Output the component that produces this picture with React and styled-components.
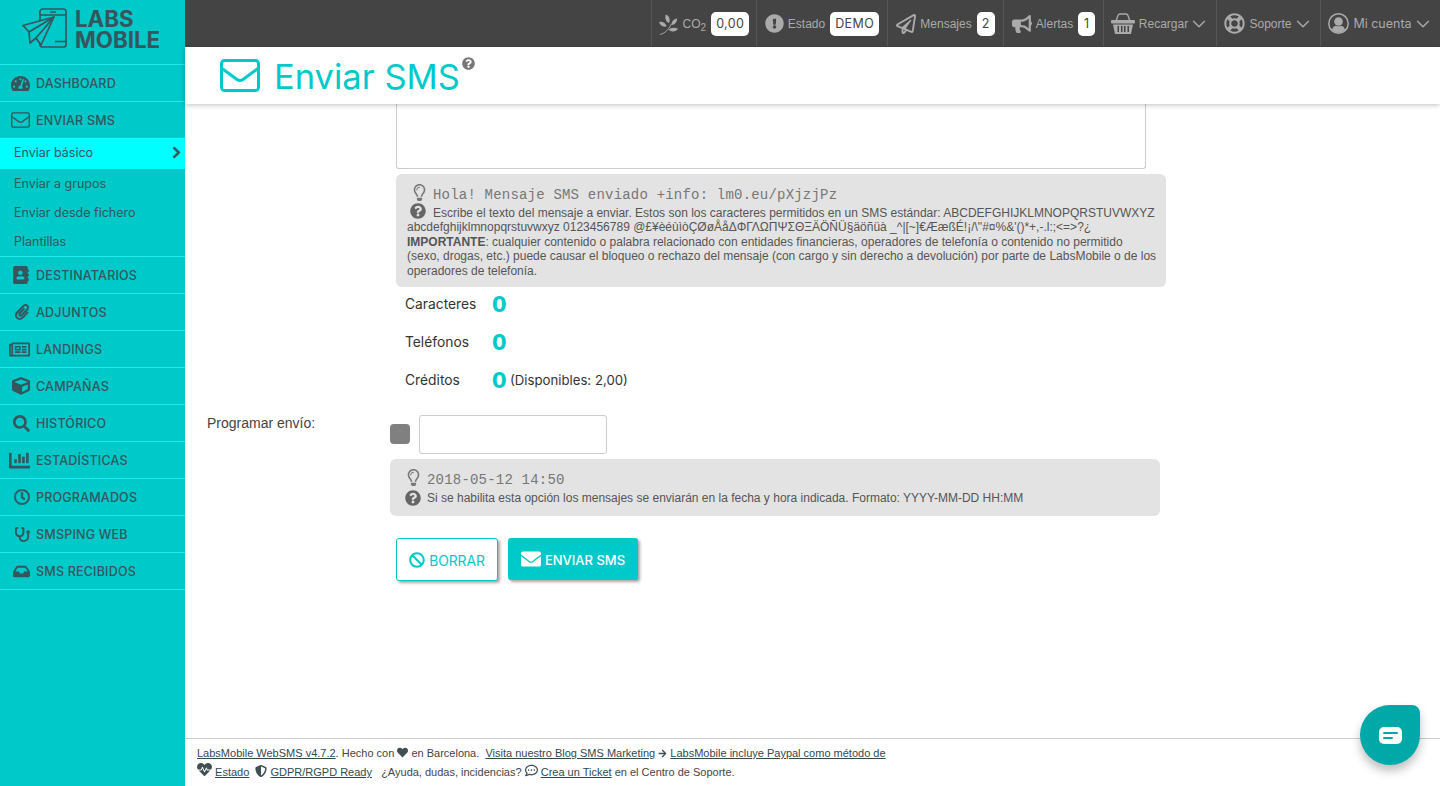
import styled, { createGlobalStyle } from 'styled-components';
import {
  FaTachometerAlt, FaAddressBook, FaPaperclip, FaRegNewspaper, FaCube, FaSearch,
  FaChartBar, FaRegClock, FaStethoscope, FaInbox, FaChevronRight, FaExclamationCircle,
  FaRegPaperPlane, FaBullhorn, FaRegLifeRing, FaQuestionCircle,
  FaRegLightbulb, FaBan, FaEnvelope, FaHeart, FaHeartbeat, FaShieldAlt, FaRegCommentDots, FaArrowRight,
} from 'react-icons/fa';
import { LuChevronDown } from 'react-icons/lu';

const teal = '#00c9c9';
const ink = '#35565c';
const geo = "Inter, 'Noto Sans', sans-serif";
const helv = "'Liberation Sans', Arial, sans-serif";
const mono = "'Liberation Mono', 'Courier New', monospace";

const GlobalStyle = createGlobalStyle`
  html, body { margin: 0; height: 100%; overflow: hidden; background: #fff; }
  * { box-sizing: border-box; }
`;

function LogoMark() {
  return (
    <svg width="46" height="42" viewBox="0 0 46 42" fill="none" stroke={ink} strokeWidth="1.7" strokeLinejoin="round">
      <path d="M18 25V3.5a2.5 2.5 0 0 1 2.500-2.500h21a2.500 2.500 0 0 1 2.500 2.500v33a2.500 2.500 0 0 1-2.500 2.500h-21a2.500 2.500 0 0 1-2.500-2.500V33" />
      <path d="M18 7h26M33 33.500h11M28 4h6" />
      <path d="M1 17.500 32 9 19 37l-5-7-6 5-1-11z" fill="#00c9c9" />
      <path d="M7 24 32 9 14 30" />
    </svg>
  );
}

function SprigIcon() {
  return (
    <svg width="20" height="24" viewBox="0 0 21 24" fill="#aaa">
      <path d="M1 23c5-1 9-5 12-11" fill="none" stroke="#aaa" strokeWidth="1" />
      <path d="M7 15C3 15 1 13 0 10c3-1 6 0 8 4zM10 11C7 9 6 6 7 2c3 1 5 4 4 8zM13 13c0-3 2-6 6-7 0 4-2 7-6 7zM10 18c2-2 6-3 10-1-2 3-6 4-10 1z" />
    </svg>
  );
}

function EnvelopeOutline({ width, height, stroke }) {
  return (
    <svg width={width} height={height} viewBox="0 0 40 33" fill="none" stroke="currentColor" strokeWidth={stroke} strokeLinejoin="round" strokeLinecap="round">
      <rect x="1.500" y="1.500" width="37" height="30" rx="3" />
      <path d="M2 9.500 17 20.500q3 2 6 0L38 9.500" />
    </svg>
  );
}

function BasketIcon() {
  return (
    <svg width="24" height="22" viewBox="0 0 24 22" fill="#aaa">
      <path d="M5 8 7 2.500Q7.500 1 9 1h6q1.500 0 2 1.500L19 8" fill="none" stroke="#aaa" strokeWidth="1.400" />
      <rect x="0" y="7" width="24" height="3.500" rx="1" />
      <path d="M2 11.500h20L20 21H4zM6.500 13v6h1.500v-6zM10 13v6h1.500v-6zM13 13v6h1.500v-6zM16.500 13v6H18v-6z" fillRule="evenodd" />
    </svg>
  );
}

function AccountIcon() {
  return (
    <svg width="21" height="21" viewBox="0 0 21 21" fill="#aaa">
      <circle cx="10.500" cy="10.500" r="9.700" fill="none" stroke="#aaa" strokeWidth="1.500" />
      <circle cx="10.500" cy="8.500" r="4.300" />
      <path d="M3.800 16.500q1.500-3.500 4-3.800 2.700 1.200 5.400 0 2.500.3 4 3.800-3 3.300-6.700 3.300t-6.700-3.300z" />
    </svg>
  );
}

const ClockIcon = styled.span`
  display: flex;

  svg { stroke: currentColor; stroke-width: 14px; }
`;

const navItems = [
  { label: 'DASHBOARD', icon: <FaTachometerAlt size={19} /> },
  { label: 'ENVIAR SMS', icon: <EnvelopeOutline width={19} height={16} stroke={2.800} />, subs: ['Enviar básico', 'Enviar a grupos', 'Enviar desde fichero', 'Plantillas'] },
  { label: 'DESTINATARIOS', icon: <FaAddressBook size={18} /> },
  { label: 'ADJUNTOS', icon: <FaPaperclip size={16} /> },
  { label: 'LANDINGS', icon: <FaRegNewspaper size={21} /> },
  { label: 'CAMPAÑAS', icon: <FaCube size={18} /> },
  { label: 'HISTÓRICO', icon: <FaSearch size={17} /> },
  { label: 'ESTADÍSTICAS', icon: <FaChartBar size={21} /> },
  { label: 'PROGRAMADOS', icon: <ClockIcon><FaRegClock size={16} /></ClockIcon> },
  { label: 'SMSPING WEB', icon: <FaStethoscope size={15} /> },
  { label: 'SMS RECIBIDOS', icon: <FaInbox size={17} /> },
];

const topItems = [
  { width: 105, label: 'CO', sub: '2', icon: <SprigIcon />, badge: '0,00' },
  { width: 131, label: 'Estado', icon: <FaExclamationCircle size={19} />, badge: 'DEMO' },
  { width: 116, label: 'Mensajes', icon: <FaRegPaperPlane size={20} />, badge: '2' },
  { width: 100, label: 'Alertas', icon: <FaBullhorn size={20} />, badge: '1' },
  { width: 113, label: 'Recargar', icon: <BasketIcon />, caret: true },
  { width: 104, label: 'Soporte', icon: <FaRegLifeRing size={21} />, caret: true },
  { width: 120, label: 'Mi cuenta', icon: <AccountIcon />, caret: true, geometric: true },
];

function App() {
  return (
    <>
      <GlobalStyle />
      <Page>
        <Sidebar>
          <Logo>
            <LogoMark />
            <LogoText>LABS<br />MOBILE</LogoText>
          </Logo>
          {navItems.map((item) => (
            <div key={item.label}>
              <NavRow>
                <NavIcon>{item.icon}</NavIcon>
                {item.label}
              </NavRow>
              {item.subs && item.subs.map((sub, i) => (
                <SubRow key={sub} $active={i === 0}>
                  {sub}
                  {i === 0 && <FaChevronRight size={13} />}
                </SubRow>
              ))}
            </div>
          ))}
          <NavEnd />
        </Sidebar>
        <Main>
          <TopBar>
            {topItems.map((item) => (
              <TopItem key={item.label} $width={item.width}>
                {item.icon}
                <TopLabel $geometric={item.geometric}>
                  {item.label}
                  {item.sub && <TopSub>{item.sub}</TopSub>}
                </TopLabel>
                {item.badge && <Badge>{item.badge}</Badge>}
                {item.caret && <Caret><LuChevronDown size={22} strokeWidth={1.500} /></Caret>}
              </TopItem>
            ))}
          </TopBar>
          <TitleBar>
            <EnvelopeOutline width={40} height={33} stroke={3} />
            <Title>Enviar SMS</Title>
            <TitleHelp><FaQuestionCircle size={13} /></TitleHelp>
          </TitleBar>
          <Content>
            <MessageBox />
            <MessageHint>
              <HintCode $indent={4}><BulbMark><FaRegLightbulb size={17} /></BulbMark>Hola! Mensaje SMS enviado +info: lm0.eu/pXjzjPz</HintCode>
              <HintText>
                <HintMark><FaQuestionCircle size={16} /></HintMark>
                Escribe el texto del mensaje a enviar. Estos son los caracteres permitidos en un SMS estándar: ABCDEFGHIJKLMNOPQRSTUVWXYZ abcdefghijklmnopqrstuvwxyz 0123456789 @£¥èéùìòÇØøÅåΔΦΓΛΩΠΨΣΘΞÄÖÑÜ§äöñüà _^|{}[~]€ÆæßÉ!¡/\"#¤%&'()*+,-.l:;&lt;=&gt;?¿
                <br />
                <strong>IMPORTANTE</strong>: cualquier contenido o palabra relacionado con entidades financieras, operadores de telefonía o contenido no permitido (sexo, drogas, etc.) puede causar el bloqueo o rechazo del mensaje (con cargo y sin derecho a devolución) por parte de LabsMobile o de los operadores de telefonía.
              </HintText>
            </MessageHint>
            <Counters>
              <CounterRow><CounterName>Caracteres</CounterName><CounterValue>0</CounterValue></CounterRow>
              <CounterRow><CounterName>Teléfonos</CounterName><CounterValue>0</CounterValue></CounterRow>
              <CounterRow>
                <CounterName>Créditos</CounterName>
                <CounterValue>0</CounterValue>
                <Available>(Disponibles: 2,00)</Available>
              </CounterRow>
            </Counters>
            <ScheduleRow>
              <ScheduleLabel>Programar envío:</ScheduleLabel>
              <Toggle />
              <DateInput />
            </ScheduleRow>
            <ScheduleHint>
              <HintCode $indent={0}><BulbMark><FaRegLightbulb size={17} /></BulbMark>2018-05-12 14:50</HintCode>
              <HintLine><FaQuestionCircle size={16} />Si se habilita esta opción los mensajes se enviarán en la fecha y hora indicada. Formato: YYYY-MM-DD HH:MM</HintLine>
            </ScheduleHint>
            <Actions>
              <OutlineButton><FaBan size={16} /><ButtonText>BORRAR</ButtonText></OutlineButton>
              <SolidButton><FaEnvelope size={20} /><ButtonText>ENVIAR SMS</ButtonText></SolidButton>
            </Actions>
          </Content>
          <Footer>
            <FootLine>
              <FootLink>LabsMobile WebSMS v4.7.2</FootLink>. Hecho con <FaHeart size={11} /> en Barcelona.&nbsp; <FootLink>Visita nuestro Blog SMS Marketing</FootLink> <FaArrowRight size={9} /> <FootLink>LabsMobile incluye Paypal como método de</FootLink>
            </FootLine>
            <FootLine>
              <FaHeartbeat size={15} /> <FootLink>Estado</FootLink> &nbsp;<FaShieldAlt size={12} /> <FootLink>GDPR/RGPD Ready</FootLink> &nbsp;&nbsp;¿Ayuda, dudas, incidencias? <FaRegCommentDots size={13} /> <FootLink>Crea un Ticket</FootLink> en el Centro de Soporte.
            </FootLine>
          </Footer>
        </Main>
        <ChatBubble>
          <svg width="23" height="17" viewBox="0 0 23 17">
            <rect width="23" height="17" rx="5" fill="#fff" />
            <path d="M5 6h13M5 11h8" stroke="#00a8a8" strokeWidth="2" strokeLinecap="round" />
          </svg>
        </ChatBubble>
      </Page>
    </>
  );
}

const Page = styled.div`
  display: flex;
  height: 786px;
  position: relative;
  overflow: hidden;
`;

const Sidebar = styled.aside`
  width: 185px;
  flex: none;
  background: ${teal};
  color: ${ink};
`;

const Logo = styled.div`
  height: 64px;
  display: flex;
  align-items: center;
  gap: 7px;
  padding: 0 0 7px 22px;
`;

const LogoText = styled.div`
  font: 700 22.300px/21px ${geo};
  color: ${ink};
`;

const NavRow = styled.div`
  height: 37px;
  border-top: 1px solid #1fecec;
  display: flex;
  align-items: center;
  font: 500 12.500px ${geo};
  letter-spacing: 0.2px;
`;

const NavEnd = styled.div`
  border-top: 1px solid #1fecec;
`;

const NavIcon = styled.span`
  width: 36px;
  padding: 0 6px 0 8px;
  flex: none;
  display: flex;
  justify-content: flex-end;
`;

const SubRow = styled.div`
  height: ${({ $active }) => ($active ? '31px' : '29px')};
  padding: 0 2px ${({ $active }) => ($active ? '2px' : '0')} 14px;
  display: flex;
  align-items: center;
  justify-content: space-between;
  font: 12.500px ${geo};
  background: ${({ $active }) => ($active ? '#00ffff' : 'transparent')};

  svg { stroke: currentColor; stroke-width: 30px; }
`;

const Main = styled.div`
  flex: 1;
  min-width: 0;
  display: flex;
  flex-direction: column;
`;

const TopBar = styled.header`
  height: 47px;
  flex: none;
  background: #444;
  display: flex;
  justify-content: flex-end;
`;

const TopItem = styled.div`
  width: ${({ $width }) => $width}px;
  border-left: 1px solid #555;
  display: flex;
  align-items: center;
  justify-content: center;
  gap: 4px;
  color: #aaa;
`;

const TopLabel = styled.span`
  font: ${({ $geometric }) => ($geometric ? `12.500px ${geo}` : `12px ${helv}`)};
`;

const TopSub = styled.span`
  font-size: 10px;
  position: relative;
  top: 3px;
`;

const Caret = styled.span`
  display: flex;
  margin: 0 -1px 0 -4px;
`;

const Badge = styled.span`
  min-width: 17px;
  height: 24px;
  padding: 0 5px;
  margin-left: 1px;
  border-radius: 5px;
  background: #fff;
  color: #444;
  font: 12.500px/24px ${geo};
  letter-spacing: 0.4px;
  text-align: center;
`;

const TitleBar = styled.div`
  height: 57px;
  flex: none;
  position: relative;
  z-index: 1;
  padding-left: 35px;
  display: flex;
  align-items: center;
  gap: 14px;
  color: ${teal};
  background: #fff;
  box-shadow: 0 1px 5px rgba(0, 0, 0, 0.25);
`;

const Title = styled.h1`
  margin: 2px 0 0;
  font: 400 34.500px ${geo};
`;

const TitleHelp = styled.span`
  align-self: flex-start;
  margin: 9px 0 0 -12px;
  color: #777;
`;

const Content = styled.main`
  flex: 1;
  min-height: 0;
  overflow: hidden;
  padding-left: 205px;
`;

const MessageBox = styled.div`
  width: 750px;
  height: 65px;
  margin-left: 6px;
  border: 1px solid #ccc;
  border-top: none;
  border-radius: 0 0 3px 3px;
`;

const HintPanel = styled.div`
  background: #e3e3e3;
  border-radius: 6px;
  color: #555;
`;

const MessageHint = styled(HintPanel)`
  width: 770px;
  height: 113px;
  margin: 5px 0 0 6px;
  padding: 12px 9px 0 11px;
`;

const ScheduleHint = styled(HintPanel)`
  width: 770px;
  height: 57px;
  margin-top: 5px;
  padding: 12px 15px 0;
`;

const HintCode = styled.div`
  height: 18px;
  display: flex;
  align-items: center;
  gap: 5px;
  padding-left: ${({ $indent }) => $indent}px;
  font: 14px ${mono};
  letter-spacing: 0.2px;
  color: #777;
`;

const BulbMark = styled.span`
  display: flex;
  margin-top: -5px;
`;

const HintText = styled.div`
  font: 12px/14.400px ${helv};
  margin-top: 2px;
`;

const HintMark = styled.span`
  display: inline-block;
  height: 14px;
  line-height: 0;
  margin: 0 7px 0 3px;
  vertical-align: top;
  color: #666;

  svg { margin-top: -3px; }
`;

const HintLine = styled.div`
  display: flex;
  align-items: center;
  gap: 6px;
  margin-top: 1px;
  font: 12px ${helv};

  svg { color: #666; }
`;

const Counters = styled.div`
  margin-left: 15px;
  display: flex;
  flex-direction: column;
  gap: 4px;
`;

const CounterRow = styled.div`
  height: 34px;
  display: flex;
  align-items: center;
`;

const CounterName = styled.span`
  width: 87px;
  font: 13.800px ${geo};
  color: #333;
`;

const CounterValue = styled.span`
  width: 18px;
  font: 800 21px ${geo};
  color: ${teal};
`;

const Available = styled.span`
  font: 13.200px ${geo};
  color: #333;
`;

const ScheduleRow = styled.div`
  margin: 18px 0 0 -183px;
  display: flex;
  align-items: flex-start;
`;

const ScheduleLabel = styled.label`
  width: 183px;
  font: 14px ${helv};
  color: #444;
`;

const Toggle = styled.span`
  width: 20px;
  height: 20px;
  margin-top: 9px;
  border-radius: 4px;
  background: #808080;
`;

const DateInput = styled.input`
  width: 188px;
  height: 39px;
  margin-left: 9px;
  border: 1px solid #ccc;
  border-radius: 3px;
  background: #fff;
  outline: none;
`;

const Actions = styled.div`
  margin: 22px 0 0 6px;
  display: flex;
  align-items: flex-start;
  gap: 10px;
`;

const ButtonText = styled.span`
  padding-top: 2px;
`;

const OutlineButton = styled.button`
  width: 102px;
  height: 43px;
  padding: 0;
  display: flex;
  align-items: center;
  justify-content: center;
  gap: 4px;
  border: 1px solid ${teal};
  border-radius: 3px;
  background: #fff;
  color: ${teal};
  font: 400 13.800px ${geo};
  box-shadow: 2px 2px 3px rgba(0, 0, 0, 0.35);
`;

const SolidButton = styled.button`
  width: 130px;
  height: 42px;
  padding: 0;
  display: flex;
  align-items: center;
  justify-content: center;
  gap: 4px;
  border: none;
  border-radius: 3px;
  background: ${teal};
  color: #fff;
  font: 500 13px ${geo};
  box-shadow: 2px 2px 3px rgba(0, 0, 0, 0.35);
`;

const Footer = styled.footer`
  height: 48px;
  flex: none;
  padding: 5px 0 0 12px;
  border-top: 1px solid #ccc;
  font: 11px/18px ${helv};
  color: #444;

  svg { vertical-align: -1px; color: #3f4f52; }
`;

const FootLine = styled.div`
  height: 18px;
`;

const FootLink = styled.a`
  color: #2f4a4e;
  text-decoration: underline;
`;

const ChatBubble = styled.div`
  position: absolute;
  left: 1360px;
  top: 705px;
  width: 60px;
  height: 60px;
  display: flex;
  align-items: center;
  justify-content: center;
  border-radius: 30px 8px 30px 30px;
  background: #00a8a8;
  box-shadow: 0 6px 10px rgba(0, 0, 0, 0.25);
`;

export default App;
